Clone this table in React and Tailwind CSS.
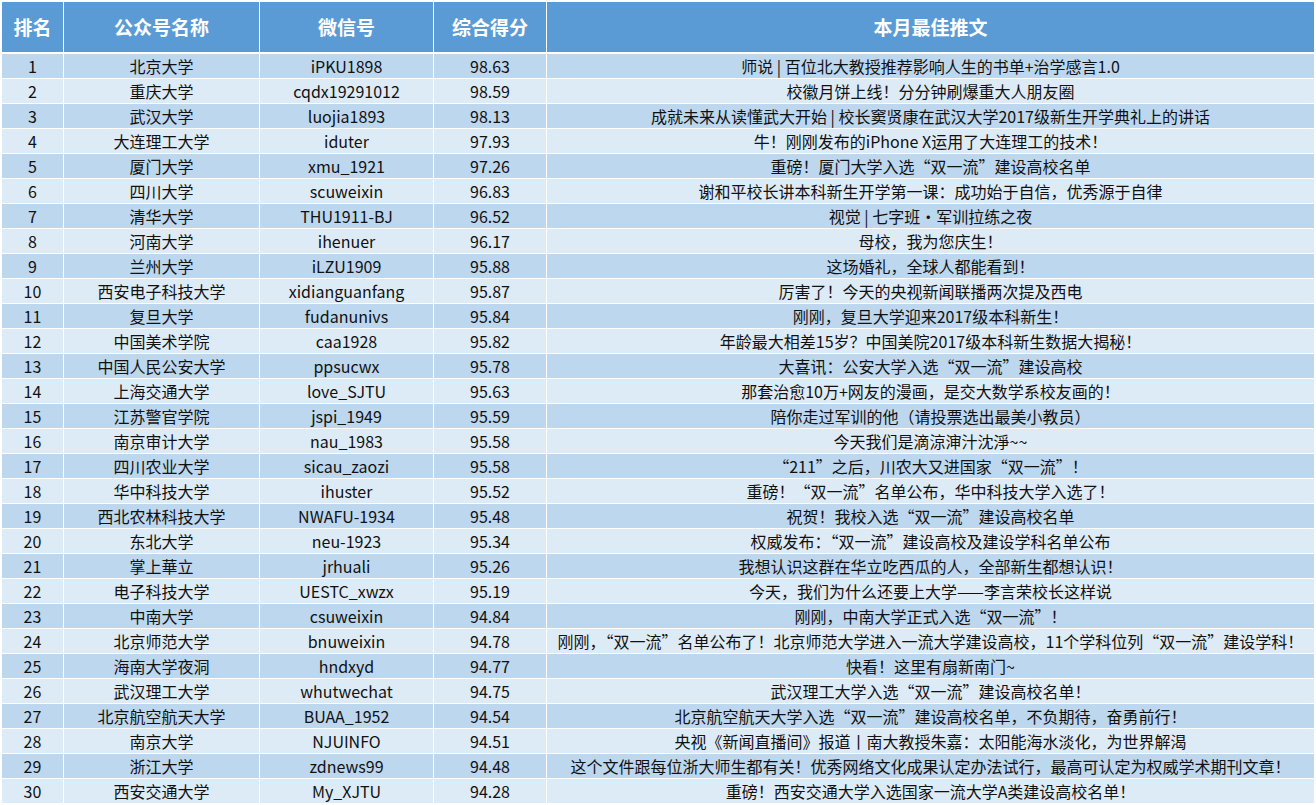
import React from 'react';

// 公众号月度排行数据
const rows = [
  ['1', '北京大学', 'iPKU1898', '98.63', '师说 | 百位北大教授推荐影响人生的书单+治学感言1.0'],
  ['2', '重庆大学', 'cqdx19291012', '98.59', '校徽月饼上线！分分钟刷爆重大人朋友圈'],
  ['3', '武汉大学', 'luojia1893', '98.13', '成就未来从读懂武大开始 | 校长窦贤康在武汉大学2017级新生开学典礼上的讲话'],
  ['4', '大连理工大学', 'iduter', '97.93', '牛！刚刚发布的iPhone X运用了大连理工的技术！'],
  ['5', '厦门大学', 'xmu_1921', '97.26', '重磅！厦门大学入选“双一流”建设高校名单'],
  ['6', '四川大学', 'scuweixin', '96.83', '谢和平校长讲本科新生开学第一课：成功始于自信，优秀源于自律'],
  ['7', '清华大学', 'THU1911-BJ', '96.52', '视觉 | 七字班·军训拉练之夜'],
  ['8', '河南大学', 'ihenuer', '96.17', '母校，我为您庆生！'],
  ['9', '兰州大学', 'iLZU1909', '95.88', '这场婚礼，全球人都能看到！'],
  ['10', '西安电子科技大学', 'xidianguanfang', '95.87', '厉害了！今天的央视新闻联播两次提及西电'],
  ['11', '复旦大学', 'fudanunivs', '95.84', '刚刚，复旦大学迎来2017级本科新生！'],
  ['12', '中国美术学院', 'caa1928', '95.82', '年龄最大相差15岁？中国美院2017级本科新生数据大揭秘！'],
  ['13', '中国人民公安大学', 'ppsucwx', '95.78', '大喜讯：公安大学入选“双一流”建设高校'],
  ['14', '上海交通大学', 'love_SJTU', '95.63', '那套治愈10万+网友的漫画，是交大数学系校友画的！'],
  ['15', '江苏警官学院', 'jspi_1949', '95.59', '陪你走过军训的他（请投票选出最美小教员）'],
  ['16', '南京审计大学', 'nau_1983', '95.58', '今天我们是滴涼渖汁沈淨~~'],
  ['17', '四川农业大学', 'sicau_zaozi', '95.58', '“211”之后，川农大又进国家“双一流”！'],
  ['18', '华中科技大学', 'ihuster', '95.52', '重磅！“双一流”名单公布，华中科技大学入选了！'],
  ['19', '西北农林科技大学', 'NWAFU-1934', '95.48', '祝贺！我校入选“双一流”建设高校名单'],
  ['20', '东北大学', 'neu-1923', '95.34', '权威发布：“双一流”建设高校及建设学科名单公布'],
  ['21', '掌上華立', 'jrhuali', '95.26', '我想认识这群在华立吃西瓜的人，全部新生都想认识！'],
  ['22', '电子科技大学', 'UESTC_xwzx', '95.19', '今天，我们为什么还要上大学——李言荣校长这样说'],
  ['23', '中南大学', 'csuweixin', '94.84', '刚刚，中南大学正式入选“双一流”！'],
  ['24', '北京师范大学', 'bnuweixin', '94.78', '刚刚，“双一流”名单公布了！北京师范大学进入一流大学建设高校，11个学科位列“双一流”建设学科！'],
  ['25', '海南大学夜洞', 'hndxyd', '94.77', '快看！这里有扇新南门~'],
  ['26', '武汉理工大学', 'whutwechat', '94.75', '武汉理工大学入选“双一流”建设高校名单！'],
  ['27', '北京航空航天大学', 'BUAA_1952', '94.54', '北京航空航天大学入选“双一流”建设高校名单，不负期待，奋勇前行！'],
  ['28', '南京大学', 'NJUINFO', '94.51', '央视《新闻直播间》报道丨南大教授朱嘉：太阳能海水淡化，为世界解渴'],
  ['29', '浙江大学', 'zdnews99', '94.48', '这个文件跟每位浙大师生都有关！优秀网络文化成果认定办法试行，最高可认定为权威学术期刊文章！'],
  ['30', '西安交通大学', 'My_XJTU', '94.28', '重磅！西安交通大学入选国家一流大学A类建设高校名单！'],
];

const headers = ['排名', '公众号名称', '微信号', '综合得分', '本月最佳推文'];

const cols = 'grid grid-cols-[61px_195px_173px_112px_767px] gap-x-px';

export default function App() {
  return (
    <div className="min-h-[805px] bg-white pl-[2px] pt-[2px] font-['Microsoft_YaHei','Noto_Sans_CJK_SC',sans-serif]">
      <div className="flex w-[1312px] flex-col gap-y-px bg-white">
        <div className={`${cols} mb-px`}>
          {headers.map((h) => (
            <div
              key={h}
              className="flex h-[50px] items-center justify-center bg-[#5b9bd5] text-[19px] font-bold text-white"
            >
              {h}
            </div>
          ))}
        </div>
        {rows.map((r, i) => (
          <div key={r[0]} className={cols}>
            {r.map((c, j) => (
              <div
                key={j}
                className={`flex h-[24px] items-center justify-center whitespace-nowrap text-[16px] leading-none text-[#111] ${
                  i % 2 === 0 ? 'bg-[#bdd7ee]' : 'bg-[#ddebf7]'
                }`}
              >
                {c}
              </div>
            ))}
          </div>
        ))}
      </div>
    </div>
  );
}
